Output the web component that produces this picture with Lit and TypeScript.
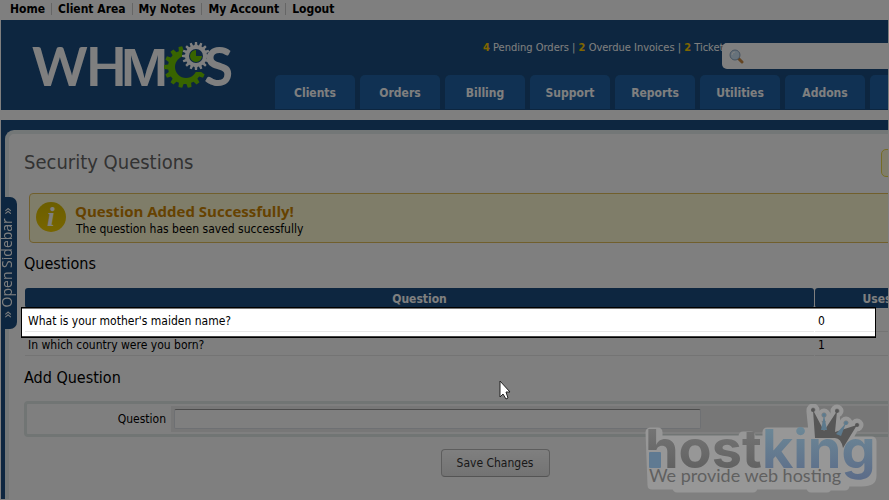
import { LitElement, html, css, svg } from "lit";
import { customElement, property } from "lit/decorators.js";

const topLinks = ["Home", "Client Area", "My Notes", "My Account", "Logout"];
const tabs = ["Clients", "Orders", "Billing", "Support", "Reports", "Utilities", "Addons", "Setup"];
const questions = [
  { text: "What is your mother's maiden name?", uses: 0 },
  { text: "In which country were you born?", uses: 1 },
];

function gearPath(cx: number, cy: number, teeth: number, outer: number, inner: number): string {
  const pts: string[] = [];
  const step = (Math.PI * 2) / teeth;
  for (let i = 0; i < teeth; i++) {
    const a = i * step;
    for (const [f, r] of [[-0.32, inner], [-0.2, outer], [0.2, outer], [0.32, inner]]) {
      pts.push(`${(cx + Math.cos(a + f * step) * r).toFixed(2)} ${(cy + Math.sin(a + f * step) * r).toFixed(2)}`);
    }
  }
  return `M${pts.join("L")}Z`;
}

@customElement("whm-logo")
export class WhmLogo extends LitElement {
  static styles = css`
    :host { display: block; }
    svg { display: block; }
    text { font: 700 53px Lato, sans-serif; fill: #fff; }
    .m { font: 600 51px Inter, sans-serif; }
  `;
  render() {
    return html`<svg width="210" height="60" viewBox="0 0 210 60" role="img" aria-label="WHMCS">
      <defs>
        <mask id="ring">
          <rect width="210" height="60" fill="#fff"></rect>
          <circle cx="156" cy="32" r="11" fill="#000"></circle>
          <circle cx="166" cy="21" r="14" fill="#000"></circle>
          <path d="M160 26H180V37H164L160 34Z" fill="#000"></path>
        </mask>
        <mask id="hub">
          <rect width="210" height="60" fill="#fff"></rect>
          <circle cx="166" cy="21" r="7" fill="#000"></circle>
        </mask>
      </defs>
      <text x="2" y="51">W</text>
      <text x="56" y="51">H</text>
      <text class="m" x="91" y="51">M</text>
      <text x="174" y="51">S</text>
      <path d="${gearPath(155, 32, 14, 21, 17)}" fill="#70c800" mask="url(#ring)"></path>
      <path d="${gearPath(166, 21, 16, 14, 11)}" fill="#fff" mask="url(#hub)"></path>
      <path d="M166 21V15A6 6 0 1 0 172 21Z" fill="#70c800"></path>
    </svg>`;
  }
}

@customElement("host-badge")
export class HostBadge extends LitElement {
  static styles = css`
    :host { display: block; }
    svg { display: block; }
    .name { font: 700 54px Inter, sans-serif; }
    .tag { font: 400 18px Lato, sans-serif; }
    .halo { fill: #979797; stroke: #979797; stroke-width: 9px; stroke-linejoin: round; stroke-linecap: round; }
    .dark { fill: url(#dark); }
    .blue { fill: url(#blue); }
    .ink { fill: #606060; }
  `;
  private crown() {
    return svg`
      <path d="M170 6L181 27L194 7L192 28L214 21L200 44Q198 34 192 34H172Z" fill="#575757"></path>
      <path d="M181 11L178 26L184 26ZM203 19L193 30L198 32Z" fill="#5d7a8d"></path>
      <g fill="#555"><circle cx="170" cy="6" r="2"></circle><circle cx="194" cy="7" r="2"></circle><circle cx="214" cy="21" r="2"></circle></g>
      <g fill="#5d7a8d"><circle cx="181" cy="11" r="2"></circle><circle cx="203" cy="19" r="2"></circle></g>`;
  }
  render() {
    return html`<svg width="246" height="96" viewBox="0 0 246 96" role="img" aria-label="hostking, We provide web hosting">
      <defs>
        <linearGradient id="dark" x1="0" y1="0" x2="0" y2="1">
          <stop offset="0.2" stop-color="#747474"></stop><stop offset="1" stop-color="#5c5c5c"></stop>
        </linearGradient>
        <linearGradient id="blue" x1="0" y1="0" x2="0" y2="1">
          <stop offset="0.2" stop-color="#6c8796"></stop><stop offset="1" stop-color="#5b6b88"></stop>
        </linearGradient>
      </defs>
      <g class="halo" aria-hidden="true">
        <path d="M7 28H15V36H100V32H108V36H124V28H170L168 8L181 30L192 10L194 28L212 22L204 37H229V72Q229 78 219 78H202V82H184V84H168V81H110V84H50V84H34V81H9Z"></path>
        <circle cx="170" cy="6" r="2"></circle><circle cx="181" cy="11" r="2"></circle>
        <circle cx="194" cy="7" r="2"></circle><circle cx="203" cy="19" r="2"></circle>
        <circle cx="214" cy="21" r="2"></circle>
      </g>
      ${this.crown()}
      <text class="name" x="2" y="64"><tspan class="dark">host</tspan><tspan class="blue">king</tspan></text>
      <rect x="5" y="46" width="13" height="19" fill="#979797"></rect>
      <rect x="6" y="48" width="12" height="16" rx="1" fill="#5f7a92"></rect>
      <text class="tag ink" x="6" y="78">We provide web hosting</text>
    </svg>`;
  }
}

@customElement("app-root")
export class AppRoot extends LitElement {
  @property({ type: Array }) rows = questions;

  static styles = css`
    :host {
      position: relative;
      overflow: hidden;
      min-height: 100vh;
      box-sizing: border-box;
      padding: 0 1px 1px;
      display: flex;
      flex-direction: column;
      background: #fff;
      color: #000;
      font: 12px/16px "DejaVu Sans Condensed", "DejaVu Sans", sans-serif;
    }
    a { color: inherit; text-decoration: none; white-space: nowrap; }
    h1, h2, h3, p { margin: 0; font-weight: 400; }

    .top { display: flex; align-items: center; height: 20px; padding: 0 9px 2px; box-sizing: border-box; font-weight: 700; line-height: 12px; }
    .top a + a { margin-left: 6px; padding-left: 6px; border-left: 1px solid #ccc; }

    .header { position: relative; display: flex; justify-content: space-between; height: 90px; background: #1a4d80; }
    .logo { margin: 15px 0 0 29px; flex: none; }
    .side { display: flex; flex-direction: column; justify-content: space-between; width: 613px; flex: none; margin-left: auto; }
    .stats { margin: 20px 0 0 208px; font-size: 11px; color: #fff; white-space: nowrap; }
    .stats b { color: #fc0; }
    .tabs { display: flex; gap: 5px; margin-bottom: 1px; overflow: hidden; }
    .tabs a { flex: none; width: 80px; height: 34px; line-height: 36px; border-radius: 5px 5px 0 0; background: #2063a6; color: #fff; text-align: center; font-weight: 700; }
    .search { position: absolute; right: 0; top: 23px; width: 166px; height: 26px; display: flex; align-items: center; gap: 4px; padding-left: 7px; box-sizing: border-box; background: #fff; border-radius: 5px 0 0 5px; }
    .search input { flex: 1; min-width: 0; border: 0; outline: 0; background: none; font: inherit; }

    .frame { flex: 1; margin-top: 10px; padding: 10px 0 0 4px; background: #1a4d80; display: flex; }
    .content { flex: 1; min-width: 0; box-sizing: border-box; border: solid #e7eeee; border-width: 4px 0 0 4px; border-radius: 9px 0 0 0; background: #fff; padding: 16px 0 20px 15px; overflow: hidden; position: relative; }
    .inner { width: calc(100% + 78px); }
    h1 { font-size: 20px; line-height: 24px; color: #666; }
    h2 { font-size: 16px; line-height: 20px; }

    .hint { position: absolute; right: -10px; top: 15px; width: 15px; height: 26px; border: 1px solid #ead94c; border-radius: 5px; background: #fffbd5; }
    .alert { display: flex; align-items: center; gap: 9px; box-sizing: border-box; height: 50px; margin: 19px 0 0 5px; padding-left: 6px; border: 1px solid #e2be5a; border-radius: 4px; background: #fffad2; }
    .alert h3 { padding-top: 4px; font: 700 15px/18px "Open Sans", sans-serif; color: #cc8400; }
    .alert p { line-height: 18px; padding-left: 1px; }
    .i { font: italic 700 28px "Liberation Serif", serif; fill: #fff; }
    .questions { margin-top: 11px; }

    table { width: 100%; margin: 14px 0 12px; border-collapse: separate; border-spacing: 1px 0; table-layout: fixed; }
    th { box-sizing: border-box; height: 20px; padding: 1px 0 0; background: #1a4d80; color: #fff; border-radius: 3px; }
    td { box-sizing: border-box; height: 24px; padding: 2px 3px 0; border-bottom: 1px solid #e8e8e8; }
    th.uses { width: 124px; }
    th.tools { width: 25px; }

    .form { display: grid; grid-template-columns: 144px 1fr; align-items: center; box-sizing: border-box; height: 36px; margin-top: 13px; border: 3px solid #e3eae8; border-radius: 4px; }
    .form label { text-align: right; padding-right: 5px; }
    .field { display: flex; align-items: center; height: 26px; margin-right: 3px; padding-left: 3px; background: #efefef; }
    .field input { width: 527px; height: 20px; box-sizing: border-box; border: 1px solid #dde0e6; border-top-color: #999; border-radius: 2px; background: #fff; font: inherit; }
    .actions { display: flex; justify-content: center; margin-top: 12px; }
    button { font: inherit; color: #333; }
    .save { width: 109px; height: 28px; border: 1px solid #bbb; border-bottom-color: #a8a8a8; border-radius: 4px; background: linear-gradient(#fff, #e6e6e6); }

    .sidebar { position: absolute; left: 1px; top: 197px; width: 16px; height: 132px; padding: 0 4px 0 0; border: 0; border-radius: 0 7px 7px 0; background: #1a4d80; color: #fff; font: 14px/12px "Open Sans", sans-serif; writing-mode: vertical-rl; }
    .sidebar span { display: block; transform: rotate(180deg); white-space: nowrap; }
    .spot { position: absolute; left: 21px; right: 13px; top: 307px; height: 31px; box-sizing: border-box; border: 1px solid #000; box-shadow: 0 0 0 9999px rgba(0, 0, 0, 0.5), inset 0 1px #777, inset 0 -1px #444; pointer-events: none; }
    .badge { position: absolute; right: 0; bottom: 0; pointer-events: none; }
    .cursor { position: absolute; left: 499px; top: 380px; pointer-events: none; }
  `;

  render() {
    return html`
      <nav class="top">${topLinks.map((t) => html`<a href="#">${t}</a>`)}</nav>
      <header class="header">
        <whm-logo class="logo"></whm-logo>
        <div class="side">
          <div class="stats"><b>4</b> Pending Orders | <b>2</b> Overdue Invoices | <b>2</b> Ticket(s) Awaiting Reply</div>
          <nav class="tabs">${tabs.map((t) => html`<a href="#">${t}</a>`)}</nav>
        </div>
        <label class="search">
          <svg width="15" height="15" viewBox="0 0 15 15" aria-hidden="true">
            <path d="M9 9L13 13" stroke="#c98a45" stroke-width="3" stroke-linecap="round"></path>
            <circle cx="6" cy="6" r="5" fill="#cfe4f7" stroke="#8da6c0"></circle>
            <path d="M3 6A3 3 0 0 1 6 3" fill="none" stroke="#fff"></path>
          </svg>
          <input type="text" aria-label="Search" />
        </label>
      </header>
      <div class="frame">
        <main class="content">
          <div class="hint"></div>
          <div class="inner">
            <h1>Security Questions</h1>
            <section class="alert">
              <svg width="30" height="32" viewBox="0 0 30 32" aria-hidden="true">
                <defs><linearGradient id="g" x1="0" y1="0" x2="0" y2="1">
                  <stop offset="0" stop-color="#d8bc00"></stop><stop offset="1" stop-color="#f0cc00"></stop>
                </linearGradient></defs>
                <circle cx="15" cy="15" r="15" fill="url(#g)"></circle>
                <text class="i" x="11" y="24">i</text>
              </svg>
              <div><h3>Question Added Successfully!</h3><p>The question has been saved successfully</p></div>
            </section>
            <h2 class="questions">Questions</h2>
            <table>
              <thead><tr><th>Question</th><th class="uses">Uses</th><th class="tools"></th></tr></thead>
              <tbody>${this.rows.map((r) => html`<tr><td>${r.text}</td><td>${r.uses}</td><td></td></tr>`)}</tbody>
            </table>
            <h2>Add Question</h2>
            <form @submit=${(e: Event) => e.preventDefault()}>
              <div class="form">
                <label for="question">Question</label>
                <div class="field"><input id="question" type="text" /></div>
              </div>
              <div class="actions"><button class="save" type="submit">Save Changes</button></div>
            </form>
          </div>
        </main>
      </div>
      <button class="sidebar" type="button"><span>» Open Sidebar »</span></button>
      <div class="spot"></div>
      <host-badge class="badge"></host-badge>
      <svg class="cursor" width="13" height="20" viewBox="0 0 13 20" aria-hidden="true">
        <path d="M1 1V17L4 14L7 19L9 18L7 12H11Z" fill="#fff" stroke="#222"></path>
      </svg>
    `;
  }
}
